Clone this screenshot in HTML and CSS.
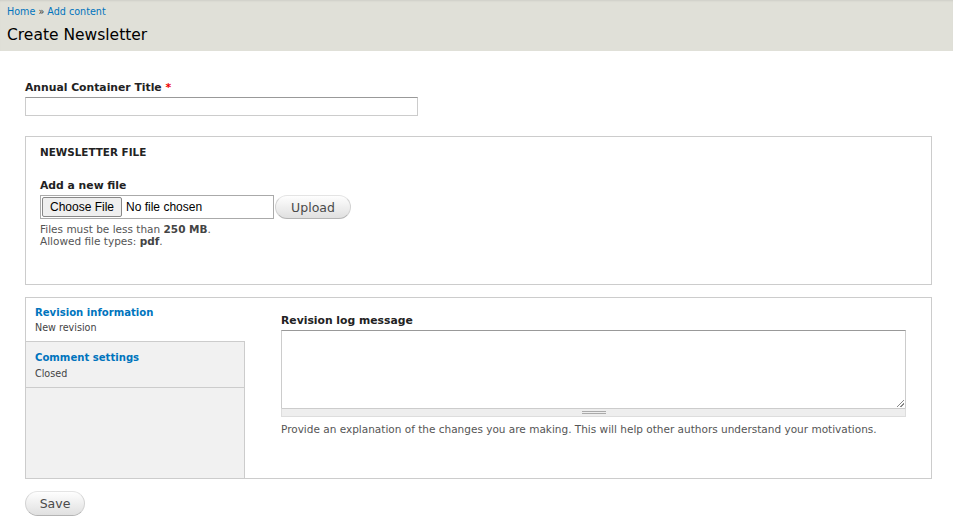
FILE: index.html
```html
<!DOCTYPE html>
<html>
<head>
<meta charset="utf-8">
<link rel="stylesheet" href="styles.css">
</head>
<body>
<header class="page-header">
  <div class="breadcrumb"><a href="#">Home</a> » <a href="#">Add content</a></div>
  <h1 class="page-title">Create Newsletter</h1>
</header>
<main class="content">
  <div class="form-item title-item">
    <label class="label">Annual Container Title <span class="req">*</span></label>
    <div class="text-input"></div>
  </div>

  <fieldset class="fieldset">
    <div class="legend">NEWSLETTER FILE</div>
    <label class="label">Add a new file</label>
    <div class="file-row">
      <div class="file-input"><span class="choose">Choose File</span><span class="nofile">No file chosen</span></div>
      <span class="btn upload">Upload</span>
    </div>
    <div class="desc">Files must be less than <strong>250 MB</strong>.<br>Allowed file types: <strong>pdf</strong>.</div>
  </fieldset>

  <div class="vtabs">
    <ul class="vtab-menu">
      <li class="vtab selected"><a href="#">Revision information</a><span class="summary">New revision</span></li>
      <li class="vtab"><a href="#">Comment settings</a><span class="summary">Closed</span></li>
    </ul>
    <div class="vtab-pane">
      <label class="label">Revision log message</label>
      <div class="textarea"><span class="resize"></span></div>
      <div class="grippie"><span class="grip"></span></div>
      <div class="desc">Provide an explanation of the changes you are making. This will help other authors understand your motivations.</div>
    </div>
  </div>

  <div class="actions"><span class="btn save">Save</span></div>
</main>
</body>
</html>
```
FILE: styles.css
```css
html, body { margin: 0; padding: 0; }
body {
  font-family: "DejaVu Sans", Verdana, sans-serif;
  font-size: 10px;
  color: #333;
  background: #fff;
}
a { color: #0074bd; text-decoration: none; }

.page-header {
  background: #e0e0d8;
  height: 51px;
  padding: 6px 7px 0;
  box-sizing: border-box;
  box-shadow: inset 0 2px 2px -1px rgba(0,0,0,0.08);
}
.breadcrumb { font-size: 9.6px; line-height: 12px; color: #333; }
.page-title {
  margin: 7px 0 0;
  font-size: 15.5px;
  font-weight: normal;
  color: #000;
  line-height: 20px;
}

.content { padding: 30px 21px 0 25px; }

.label {
  display: block;
  font-weight: bold;
  font-size: 10.8px;
  color: #222;
  line-height: 13px;
  margin-bottom: 3px;
}
.req { color: #e00; }

.text-input {
  width: 393px;
  height: 19px;
  box-sizing: border-box;
  border: 1px solid #ccc;
  border-top-color: #999;
  background: #fff;
}

.fieldset {
  margin: 20px 0 0;
  border: 1px solid #ccc;
  padding: 9px 14px 0;
  height: 149px;
  box-sizing: border-box;
}
.legend {
  font-weight: bold;
  font-size: 10.4px;
  color: #222;
  line-height: 13px;
  margin-bottom: 20px;
}
.file-row { display: flex; align-items: center; margin-top: 0; }
.file-input {
  width: 234px;
  height: 24px;
  box-sizing: border-box;
  border: 1px solid #aaa;
  background: #fff;
  display: flex;
  align-items: center;
  padding-left: 1px;
  font-family: "Liberation Sans", Arial, sans-serif;
  font-size: 12px;
  color: #000;
}
.choose {
  height: 20px;
  box-sizing: border-box;
  border: 1px solid #888;
  border-radius: 2px;
  background: #efefef;
  padding: 0 7px;
  line-height: 18px;
  margin-right: 4px;
}
.btn {
  display: inline-flex;
  align-items: center;
  justify-content: center;
  box-sizing: border-box;
  border: 1px solid #e4e4e4;
  border-bottom-color: #b4b4b4;
  border-left-color: #d2d2d2;
  border-right-color: #d2d2d2;
  border-radius: 20px;
  background: linear-gradient(#fefefe, #e0e0e0);
  color: #4a4a4a;
  font-size: 12.5px;
}
.upload { width: 76px; height: 24px; margin-left: 1px; }
.desc {
  font-size: 10.5px;
  line-height: 12px;
  color: #555;
  margin-top: 4px;
}
.desc strong { font-weight: bold; color: #444; }

.vtabs {
  margin-top: 12px;
  border: 1px solid #ccc;
  display: flex;
  height: 182px;
  box-sizing: border-box;
}
.vtab-menu {
  list-style: none;
  margin: 0;
  padding: 0;
  width: 218px;
  flex: none;
  background: #f1f1f1;
  border-right: 1px solid #ccc;
}
.vtab {
  display: flex;
  flex-direction: column;
  padding: 9px 9px 0;
  height: 46px;
  box-sizing: border-box;
  border-bottom: 1px solid #ccc;
}
.vtab.selected { background: #fff; height: 44px; margin-right: -1px; padding-top: 8px; }
.vtab a { font-weight: bold; font-size: 10.1px; line-height: 14px; }
.vtab .summary { font-size: 9.6px; line-height: 16px; color: #444; }
.vtab:not(.selected) .summary { line-height: 18px; }

.vtab-pane { flex: 1; padding: 16px 25px 0 36px; }
.textarea {
  height: 78px;
  box-sizing: border-box;
  border: 1px solid #ccc;
  border-top-color: #999;
  border-bottom: none;
  position: relative;
}
.resize {
  position: absolute;
  right: 1px;
  bottom: 1px;
  width: 7px;
  height: 7px;
  background: linear-gradient(135deg, transparent 45%, #888 45%, #888 55%, transparent 55%, transparent 70%, #888 70%, #888 80%, transparent 80%);
}
.grippie {
  height: 9px;
  background: #eee;
  border: 1px solid #ddd;
  border-top-color: #ccc;
  box-sizing: border-box;
  display: flex;
  justify-content: center;
  align-items: center;
}
.grip { width: 24px; height: 3px; border-top: 1px solid #aaa; border-bottom: 1px solid #aaa; box-sizing: border-box; }
.vtab-pane .desc { margin-top: 6px; }

.actions { margin-top: 12px; }
.save { width: 60px; height: 25px; }
```
